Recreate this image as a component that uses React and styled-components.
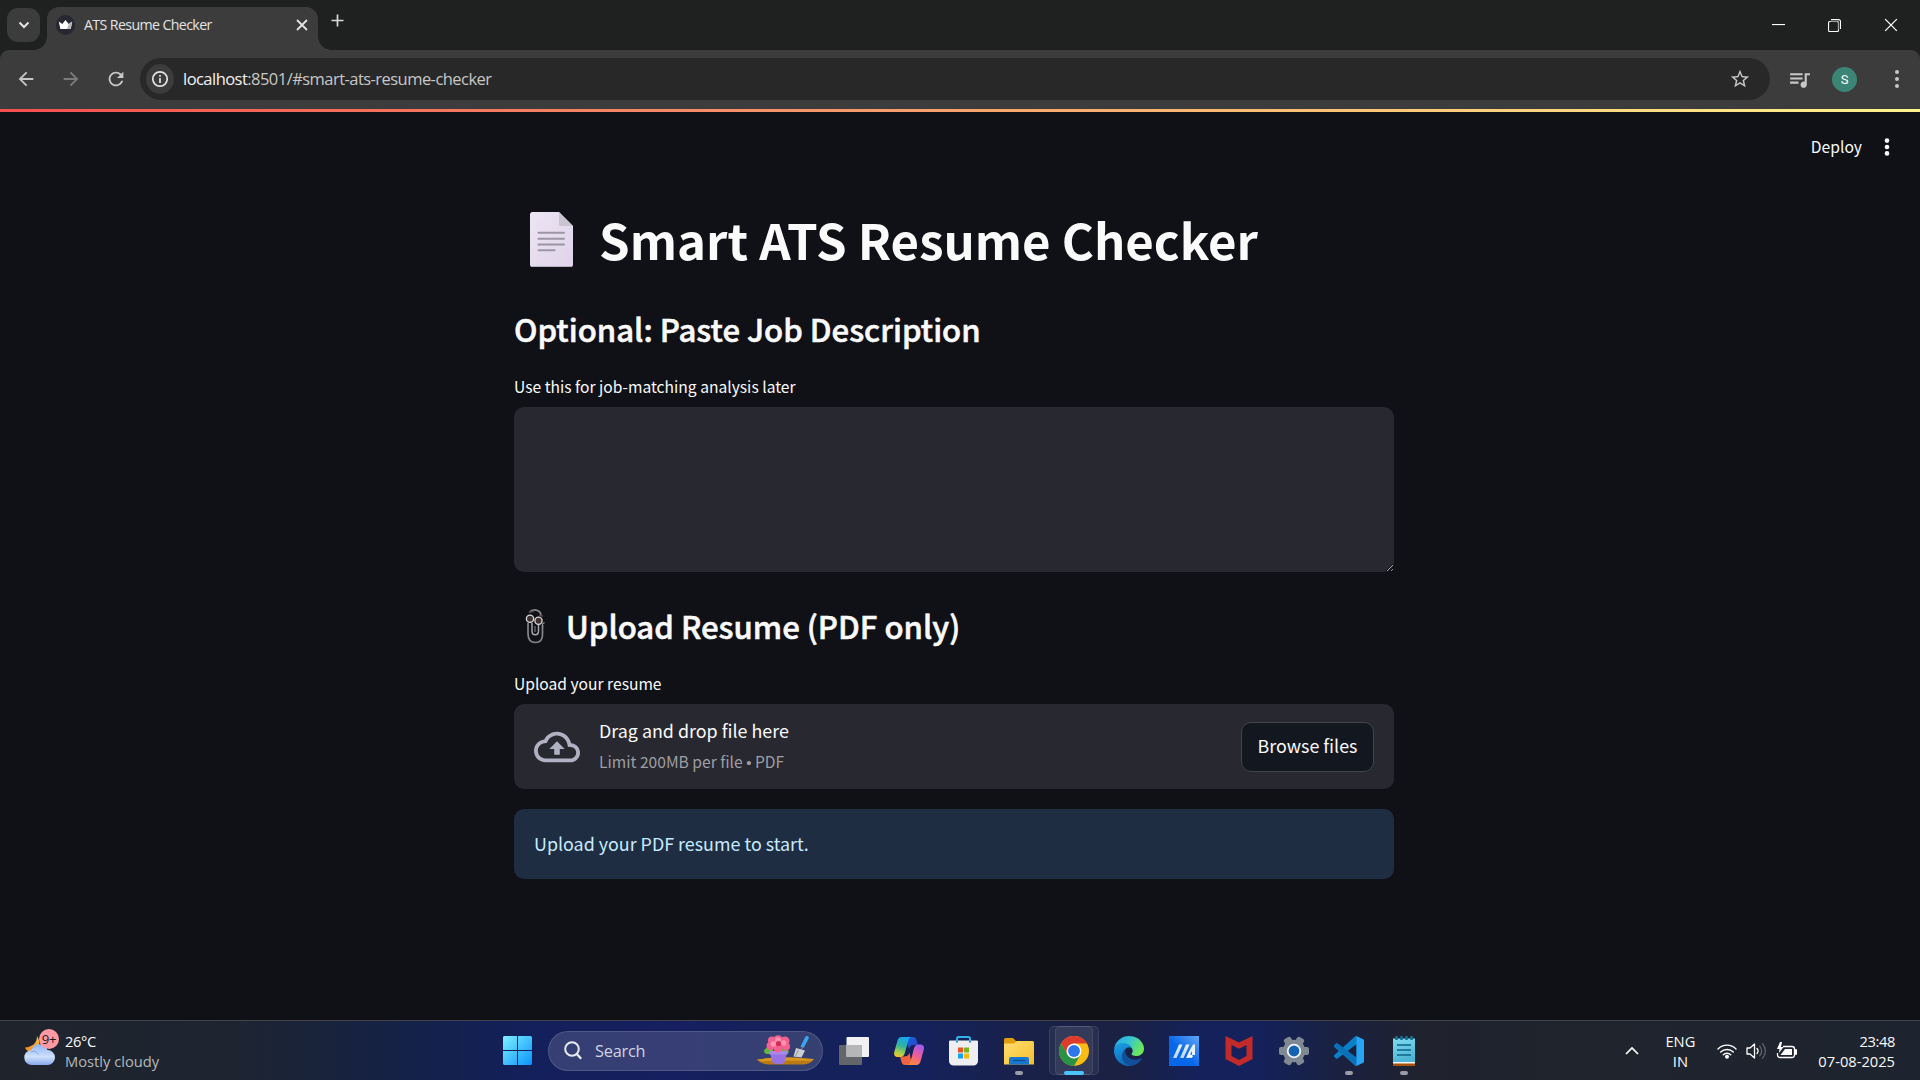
import React from "react";
import styled, { createGlobalStyle } from "styled-components";

const SANS = "'Noto Sans CJK SC', 'Noto Sans', sans-serif";
const SYSTEM = "'Open Sans', 'Noto Sans', sans-serif";

const GlobalStyle = createGlobalStyle`
  * { box-sizing: border-box; }
  body { margin: 0; background: #0f1116; overflow: hidden; }
  svg { display: block; flex: none; }
`;

const Screen = styled.div`
  width: 1920px;
  height: 1080px;
  display: flex;
  flex-direction: column;
  background: #0f1116;
  color: #fafafa;
  font-family: ${SANS};
`;

/* ---------- Browser chrome ---------- */

const TabStrip = styled.header`
  height: 50px;
  flex: none;
  display: flex;
  align-items: flex-start;
  padding: 8px 0 0 7px;
  background: #1f2120;
  font-family: ${SYSTEM};
`;

const TabSearch = styled.button`
  width: 33px;
  height: 34px;
  margin: 0 7px 0 0;
  padding: 0;
  border: 0;
  border-radius: 11px;
  background: #3c3c3c;
  display: grid;
  place-items: center;
`;

const Tab = styled.div`
  position: relative;
  width: 271px;
  height: 43px;
  margin-top: -1px;
  padding: 0 10px 7px 9px;
  border-radius: 12px 12px 0 0;
  background: #3c3c3c;
  display: flex;
  align-items: center;

  &::before,
  &::after {
    content: "";
    position: absolute;
    bottom: 0;
    width: 13px;
    height: 13px;
  }
  &::before {
    left: -13px;
    background: radial-gradient(circle at 0 0, transparent 12.5px, #3c3c3c 13px);
  }
  &::after {
    right: -13px;
    background: radial-gradient(circle at 100% 0, transparent 12.5px, #3c3c3c 13px);
  }
`;

const TabTitle = styled.span`
  flex: 1;
  margin-left: 9px;
  font-size: 14.2px;
  line-height: 20px;
  letter-spacing: -0.62px;
  color: #e3e3e3;
  white-space: nowrap;
`;

const NewTab = styled.div`
  margin: 6px 0 0 13px;
`;

const WindowControls = styled.div`
  margin: 0 22px 0 auto;
  height: 34px;
  display: flex;
  align-items: center;
  gap: 43px;
`;

const ToolbarBack = styled.div`
  flex: none;
  background: #1f2120;
`;

const Toolbar = styled.nav`
  height: 59px;
  border-radius: 9px 9px 0 0;
  background: #3c3c3c;
  display: flex;
  align-items: center;
  padding: 0 20px 1px 15px;
  font-family: ${SYSTEM};
`;

const NavButtons = styled.div`
  display: flex;
  gap: 23px;
  width: 125px;
`;

const Omnibox = styled.div`
  width: 1630px;
  height: 42px;
  border-radius: 21px;
  background: #282828;
  display: flex;
  align-items: center;
  padding: 0 19px 0 6px;
`;

const SiteInfo = styled.div`
  width: 28px;
  height: 30px;
  border-radius: 50%;
  background: #3c3c3c;
  display: grid;
  place-items: center;
`;

const Url = styled.span`
  flex: 1;
  margin-left: 9px;
  font-size: 16.5px;
  line-height: 24px;
  letter-spacing: -0.54px;
  color: #c7c7c7;
  b { font-weight: 400; color: #f2f2f2; }
`;

const ToolbarActions = styled.div`
  margin-left: auto;
  display: flex;
  align-items: center;
`;

const Avatar = styled.span`
  width: 25px;
  height: 25px;
  margin: 0 37px 0 20px;
  border-radius: 50%;
  background: #3b8577;
  color: #fff;
  font: 400 13px/25px Roboto, sans-serif;
  text-align: center;
`;

/* ---------- Page ---------- */

const Decoration = styled.div`
  height: 3px;
  flex: none;
  background: linear-gradient(90deg, #ff4b4b, #fffd80);
  background: linear-gradient(90deg, #f4504f 0%, #f58a66 35%, #fbc175 68%, #fff38c 100%);
`;

const AppHeader = styled.div`
  height: 70px;
  flex: none;
  display: flex;
  justify-content: flex-end;
  align-items: center;
  gap: 22px;
  padding: 0 30px 1px 0;
`;

const Deploy = styled.span`
  font-size: 15.66px;
  line-height: 26px;
`;

const Main = styled.main`
  flex: 1;
  width: 880px;
  margin: 24px 0 0 514px;
  display: flex;
  flex-direction: column;
`;

const Title = styled.h1`
  height: 66px;
  margin: 0;
  padding-left: 16px;
  display: flex;
  align-items: center;
  font-size: 49.1px;
  font-weight: 700;
  line-height: 66px;
  white-space: nowrap;
  svg { margin-right: 26px; }
`;

const Heading = styled.h2`
  height: 42px;
  margin: ${(p) => p.$top}px 0 0;
  padding-left: ${(p) => (p.$icon ? 11 : 0)}px;
  display: flex;
  align-items: center;
  font-size: 31.14px;
  font-weight: 500;
  line-height: 42px;
  -webkit-text-stroke: 0.55px #fafafa;
  white-space: nowrap;
  svg { margin-right: 20px; }
`;

const Label = styled.label`
  margin: 23px 0 8px;
  font-size: 15.61px;
  line-height: 26px;
`;

const TextArea = styled.textarea`
  width: 880px;
  height: 165px;
  flex: none;
  padding: 15px;
  border: 0;
  border-radius: 10px;
  background: #282831;
  color: #fafafa;
  resize: vertical;
  outline: 0;
`;

const Dropzone = styled.section`
  height: 85px;
  flex: none;
  padding: 0 20px;
  border-radius: 10px;
  background: #282831;
  display: flex;
  align-items: center;
`;

const DropText = styled.div`
  flex: 1;
  margin-left: 19px;
  padding-bottom: 1px;
  display: flex;
  flex-direction: column;
`;

const DropTitle = styled.span`
  font-size: 17.89px;
  line-height: 30px;
`;

const DropHint = styled.span`
  font-size: 15.61px;
  line-height: 32px;
  color: #9e9ea3;
  i { font: 400 15px/1 "Liberation Sans", sans-serif; }
`;

const Browse = styled.button`
  width: 133px;
  height: 50px;
  padding: 0 0 3px;
  border: 1px solid #42434b;
  border-radius: 10px;
  background: #131720;
  color: #fafafa;
  font: 400 17.87px/30px ${SANS};
`;

const Notice = styled.div`
  height: 70px;
  flex: none;
  margin-top: 20px;
  padding: 0 20px 3px;
  border-radius: 10px;
  background: #1f2d43;
  color: #c7ebff;
  display: flex;
  align-items: center;
  font-size: 17.89px;
`;

/* ---------- Taskbar ---------- */

const Taskbar = styled.footer`
  height: 60px;
  flex: none;
  display: flex;
  align-items: center;
  border-top: 1px solid #41434a;
  background: linear-gradient(90deg, #1f242c 0, #1e2531 230px, #19233b 320px, #14214d 440px, #13205a 520px, #171f60 680px, #14215a 800px, #15215a 930px, #1a2147 1040px, #1b2143 1120px, #14215b 1200px, #14215a 1260px, #1a2140 1340px, #20222e 1420px, #1f242d 1560px, #1e242f 1920px);
  font-family: ${SYSTEM};
`;

const Weather = styled.div`
  width: 478px;
  height: 59px;
  padding-left: 24px;
  display: flex;
  align-items: center;
  gap: 5px;
`;

const Lines = styled.div`
  display: flex;
  flex-direction: column;
  align-items: ${(p) => p.$align || "flex-start"};
  font-size: 14.7px;
  line-height: 20px;
  letter-spacing: ${(p) => p.$spacing || 0}px;
  white-space: nowrap;
`;

const Muted = styled.span`
  color: #b5b8bd;
`;

const Short = styled.span`
  letter-spacing: -0.4px;
`;

const WeatherIcon = styled.div`
  position: relative;
  width: 36px;
  height: 44px;
`;

const Badge = styled.span`
  position: absolute;
  left: 15px;
  top: 0;
  width: 20px;
  height: 20px;
  border-radius: 50%;
  background: #ff99a4;
  color: #1b1b1b;
  font-size: 13.2px;
  line-height: 20px;
  letter-spacing: -0.3px;
  text-align: center;
`;

const StartButton = styled.div`
  width: 70px;
  padding-left: 25px;
`;

const SearchBox = styled.div`
  width: 275px;
  height: 40px;
  margin-right: 3px;
  padding: 0 8px 0 15px;
  border: 1px solid rgba(255, 255, 255, 0.13);
  border-radius: 20px;
  background: rgba(255, 255, 255, 0.14);
  display: flex;
  align-items: center;
`;

const SearchText = styled.span`
  flex: 1;
  margin-left: 13px;
  padding-top: 1px;
  font-size: 16.3px;
  letter-spacing: -0.2px;
  color: #d0d4e0;
`;

const Slot = styled.div`
  position: relative;
  width: 55px;
  height: 59px;
  display: grid;
  place-items: center;
`;

const ActiveTile = styled.span`
  position: absolute;
  left: 3px;
  top: 5px;
  width: 44px;
  height: 49px;
  margin-left: ${(p) => p.$shift || 0}px;
  border: 1px solid rgba(255, 255, 255, 0.09);
  border-radius: 5px;
  background: rgba(255, 255, 255, 0.06);
`;

const AppGlyph = styled.span`
  position: relative;
`;

const Indicator = styled.span`
  position: absolute;
  left: 50%;
  bottom: 5px;
  width: ${(p) => (p.$active ? 20 : 8)}px;
  height: 4px;
  border-radius: 2px;
  background: ${(p) => (p.$active ? "#4cc2ff" : "#9a9ca8")};
  transform: translateX(-50%);
`;

const Tray = styled.div`
  margin-left: auto;
  padding-right: 25px;
  display: flex;
  align-items: center;
`;

const Language = styled.div`
  margin: 0 22px 0 26px;
  padding-top: 1px;
`;

const StatusIcons = styled.div`
  display: flex;
  align-items: center;
  gap: 9px;
  margin-right: 20px;
`;

/* ---------- Icons ---------- */

const Material = ({ size, d, fill = "#c7c7c7" }) => (
  <svg width={size} height={size} viewBox="0 0 24 24" fill={fill}><path d={d} /></svg>
);

const BACK = "M20 11H7.83l5.59-5.59L12 4l-8 8 8 8 1.41-1.41L7.83 13H20v-2z";
const FORWARD = "M12 4l-1.41 1.41L16.17 11H4v2h12.17l-5.58 5.59L12 20l8-8z";
const REFRESH = "M17.65 6.35A7.958 7.958 0 0012 4c-4.42 0-7.99 3.58-7.99 8s3.57 8 7.99 8c3.73 0 6.84-2.55 7.73-6h-2.08A5.99 5.99 0 0112 18c-3.31 0-6-2.69-6-6s2.69-6 6-6c1.66 0 3.14.69 4.22 1.78L13 11h7V4l-2.35 2.35z";
const STAR = "M22 9.24l-7.19-.62L12 2 9.19 8.63 2 9.24l5.46 4.73L5.82 21 12 17.27 18.18 21l-1.63-7.03L22 9.24zM12 15.4l-3.76 2.27 1-4.28-3.32-2.88 4.38-.38L12 6.1l1.71 4.04 4.38.38-3.32 2.88 1 4.28L12 15.4z";
const QUEUE = "M15 6H3v2h12V6zm0 4H3v2h12v-2zM3 16h8v-2H3v2zM17 6v8.18c-.31-.11-.65-.18-1-.18-1.66 0-3 1.34-3 3s1.34 3 3 3 3-1.34 3-3V8h3V6h-5z";
const CLOUD = "M19.35 10.04C18.67 6.59 15.64 4 12 4 9.11 4 6.6 5.64 5.35 8.04 2.34 8.36 0 10.91 0 14c0 3.31 2.69 6 6 6h13c2.76 0 5-2.24 5-5 0-2.64-2.05-4.78-4.65-4.96zM19 18H6c-2.21 0-4-1.79-4-4 0-2.05 1.53-3.76 3.56-3.97l1.07-.11.5-.95C8.08 7.14 9.94 6 12 6c2.62 0 4.88 1.86 5.39 4.43l.3 1.5 1.53.11c1.56.1 2.78 1.41 2.78 2.96 0 1.65-1.35 3-3 3zM8 13h2.55v3h2.9v-3H16l-4-4z";

const Chevron = () => (
  <svg width="12" height="12" viewBox="0 0 12 12" fill="none" stroke="#e3e3e3" strokeWidth="2"><path d="M1.5 3.5L6 8l4.500-4.500" /></svg>
);

const Favicon = () => (
  <svg width="19" height="20" viewBox="0 0 19 20">
    <ellipse cx="9.500" cy="10" rx="9.500" ry="10" fill="#262730" />
    <path d="M2.800 6.600l3.500 2.300L9.500 5l3.200 3.900 3.500-2.300-1.500 7.400H4.300z" fill="#fff" />
    <path d="M12.700 8.900l3.500-2.300-1.500 7.400H11z" fill="#b9b9bd" />
  </svg>
);

const Cross = ({ size, width, color }) => (
  <svg width={size} height={size} viewBox="0 0 12 12" fill="none" stroke={color} strokeWidth={width}><path d="M1 1l10 10M11 1L1 11" /></svg>
);

const Plus = () => (
  <svg width="13" height="13" viewBox="0 0 13 13" fill="none" stroke="#d8d8d8" strokeWidth="1.700"><path d="M6.500 .5v12M.5 6.500h12" /></svg>
);

const Minimize = () => (
  <svg width="13" height="13" viewBox="0 0 13 13"><path d="M0 5h13v1.100H0z" fill="#fff" /></svg>
);

const Restore = () => (
  <svg width="13" height="13" viewBox="0 0 13 13" fill="none" stroke="#fff" strokeWidth="1.100">
    <rect x=".55" y="2.550" width="9.900" height="9.900" rx="1" />
    <path d="M3 .6h7.500a2 2 0 0 1 2 2V10" />
    <path d="M2.600 2.500h6a2 2 0 0 1 2 2v6" stroke="#9a9a9a" />
  </svg>
);

const Info = () => (
  <svg width="18" height="18" viewBox="0 0 18 18" fill="none" stroke="#e3e3e3" strokeWidth="1.700">
    <circle cx="9" cy="9" r="7.200" /><path d="M9 8v5M9 5v1.800" />
  </svg>
);

const Dots = ({ gap, r, color }) => (
  <svg width="6" height="20" viewBox="0 0 6 20" fill={color}>
    <circle cx="3" cy={10 - gap} r={r} /><circle cx="3" cy="10" r={r} /><circle cx="3" cy={10 + gap} r={r} />
  </svg>
);

const PageEmoji = () => (
  <svg width="43" height="55" viewBox="0 0 43 55">
    <defs><linearGradient id="paper" x2="1" y2="1"><stop stopColor="#ece5f3" /><stop offset="1" stopColor="#dfd3ea" /></linearGradient></defs>
    <path d="M2.500 0H29l14 14v38.500a2.500 2.500 0 0 1-2.500 2.500h-38A2.500 2.500 0 0 1 0 52.500v-50A2.500 2.500 0 0 1 2.500 0z" fill="url(#paper)" />
    <path d="M29 0l14 14H30.500a1.500 1.500 0 0 1-1.500-1.500z" fill="#c9c4cf" />
    <path d="M1 54.500h41" stroke="#b9aec4" strokeWidth="1" />
    <path d="M8.500 20.800h25.500M8.500 26.700h25.500M8.500 32.500h25.500M8.500 38.300H24.500" stroke="#9c95a3" strokeWidth="2" strokeLinecap="round" />
  </svg>
);

const ClipEmoji = () => (
  <svg width="21" height="35" viewBox="0 0 21 35" fill="none">
    <path d="M4.500 3.200C8-.5 15 .5 16 6M3 14v10.500c0 6 3 9 7.500 9s7-3 7-8V16" stroke="#85858a" strokeWidth="1.700" />
    <path d="M7 14v8c0 5 6.500 5 6.500 0v-6" stroke="#a5a5aa" strokeWidth="1.500" />
    <path d="M10 17v6" stroke="#737378" strokeWidth="1.200" />
    <path d="M17.500 18.500V15l2-1.500" stroke="#8b8b90" strokeWidth="1.200" />
    <circle cx="5" cy="9.800" r="3.600" fill="#40302f" stroke="#dcd9dc" strokeWidth="1.300" />
    <circle cx="13.500" cy="11.800" r="3.600" fill="#40302f" stroke="#dcd9dc" strokeWidth="1.300" />
    <path d="M4 3.300l5-1M14 6.500l4 .5" stroke="#5c4745" strokeWidth="1.500" />
  </svg>
);

const MoonCloud = () => (
  <svg width="36" height="44" viewBox="0 0 36 44">
    <defs>
      <linearGradient id="cloud" x2="0" y2="1"><stop stopColor="#8fb6f5" /><stop offset=".6" stopColor="#cfe0fb" /><stop offset="1" stopColor="#86a8ec" /></linearGradient>
      <linearGradient id="moon" x1="1" x2="0" y2="1"><stop stopColor="#f5bd3e" /><stop offset="1" stopColor="#f08a1d" /></linearGradient>
    </defs>
    <path d="M13 7c4 6 3 13-4 15C6 23.500 2 22 1 18.500c7-.5 12-4 12-11.500z" fill="url(#moon)" />
    <path d="M8 36a7.500 7.500 0 0 1-.5-15A8.500 8.500 0 0 1 23.500 21a7.500 7.500 0 0 1 0 15z" fill="url(#cloud)" />
    <path d="M7 23c3-1.500 6 0 7.500 2.500" stroke="#7fa4ea" fill="none" />
  </svg>
);

const Windows = () => (
  <svg width="29" height="29" viewBox="0 0 29 29">
    <defs><linearGradient id="win" gradientUnits="userSpaceOnUse" x1="0" y1="0" x2="29" y2="29"><stop stopColor="#7df0ff" /><stop offset="1" stopColor="#0a93fb" /></linearGradient></defs>
    <path d="M1 0h13v14H0V1zM15 0h13l1 1v13H15zM0 15h14v14H1l-1-1zM15 15h14v13l-1 1H15z" fill="url(#win)" />
  </svg>
);

const Magnifier = () => (
  <svg width="18" height="19" viewBox="0 0 18 19" fill="none" stroke="#e8eaf2" strokeWidth="2">
    <circle cx="8" cy="8" r="6.800" /><path d="M12.800 13l4.400 4.800" strokeWidth="2.400" />
  </svg>
);

const Flower = () => (
  <svg width="57" height="31" viewBox="0 0 57 31">
    <path d="M0 24.500c12-1 20-3.500 30-2 10-.5 18 1 27 1.500-3 4.500-8 5.500-12 5.500H14C8 29.500 3 28 0 24.500z" fill="#b97a12" />
    <path d="M0 24.500c12-1 20-3.500 30-2 10-.5 18 1 27 1.500l-3 1.800c-10 0-38-.5-50 .7z" fill="#d79620" />
    <path d="M7 17c0-4 5-6 9-3l1 5H9zM32 17c-1-4-6-5-9-2l-2 4h9z" fill="#62b83c" />
    <path d="M13 18h17l-2.500 9.500c-2 2-10 2-12 0z" fill="#9872e2" />
    <path d="M12.500 16h18v3.500h-18z" fill="#a988ee" />
    <g fill="#f4608f">
      <circle cx="21" cy="4.800" r="4.600" /><circle cx="28" cy="6" r="4.500" /><circle cx="29" cy="11.500" r="4" /><circle cx="21" cy="13" r="4.500" /><circle cx="13.500" cy="11" r="4" /><circle cx="15" cy="5.500" r="4" />
    </g>
    <g fill="#ff94b3"><circle cx="21" cy="5" r="2.800" /><circle cx="26.500" cy="8" r="2.800" /><circle cx="16.500" cy="9" r="2.800" /></g>
    <circle cx="21.500" cy="8.500" r="2.600" fill="#d52a55" />
    <path d="M48.500 1.500c2-1.500 4 0 3 2.500l-5 9-3-1.500z" fill="#3aa5ef" />
    <path d="M45.500 12l-1.500 3" stroke="#6d7785" strokeWidth="1.500" />
    <path d="M39 13l9 2.500-3.500 7-8-1z" fill="#c9cfd4" /><path d="M41.500 15l-3 6" stroke="#8d969e" />
  </svg>
);

const TaskView = () => (
  <svg width="30" height="28" viewBox="0 0 30 28">
    <rect y="8" width="23" height="20" rx="1" fill="#62656a" />
    <rect x="7.500" width="22.500" height="20" rx="1" fill="#f1f1f3" />
    <path d="M7.500 8H23v12H7.500z" fill="#b5b6b8" />
  </svg>
);

const Copilot = () => (
  <svg width="30" height="28" viewBox="0 0 30 28">
    <defs>
      <linearGradient id="cpa" x1=".6" x2=".3" y2="1"><stop stopColor="#18a5f0" /><stop offset=".45" stopColor="#2db3a4" /><stop offset=".8" stopColor="#a8cf4a" /><stop offset="1" stopColor="#f0c62c" /></linearGradient>
      <linearGradient id="cpb" x1=".7" x2=".3" y2="1"><stop stopColor="#a25bf0" /><stop offset=".5" stopColor="#ee5c9a" /><stop offset="1" stopColor="#fb8a3c" /></linearGradient>
      <linearGradient id="cpc" x2="1" y2="1"><stop stopColor="#1a63e0" /><stop offset="1" stopColor="#2a3fc6" /></linearGradient>
    </defs>
    <path d="M12 0h7c2 0 3 1.300 3.500 3L24 8h-4c-3 0-4 1.500-5 4z" fill="url(#cpc)" />
    <path d="M18 28h-7c-2 0-3-1.300-3.500-3L6 19.500h4c3 0 4.500-1 5.500-4z" fill="#ef6340" />
    <path d="M7.500 0H18c-2 0-3 1.500-3.600 3.500L10.800 16c-.8 2.700-2 4-4.500 4H3.500C.8 20-.4 18 .3 15L3.500 3.500C4.200 1.200 5.300 0 7.500 0z" fill="url(#cpa)" />
    <path d="M22.500 28H13c2 0 3-1.500 3.600-3.500L19.800 12c.8-2.700 2-4.500 4.500-4.500h2.400c2.600 0 3.800 2 3.100 5L26.500 24.500c-.7 2.300-1.800 3.500-4 3.500z" fill="url(#cpb)" />
  </svg>
);

const Store = () => (
  <svg width="29" height="30" viewBox="0 0 29 30">
    <path d="M8 5.500V2.500A1.500 1.500 0 0 1 9.500 1h10A1.500 1.500 0 0 1 21 2.500v3" fill="none" stroke="#2fb4ea" strokeWidth="2" />
    <path d="M0 5.500a1 1 0 0 1 1-1h27a1 1 0 0 1 1 1V25a4.500 4.500 0 0 1-4.500 4.500h-20A4.500 4.500 0 0 1 0 25z" fill="#efeff1" />
    <path d="M8 4.500v2M21 4.500v2" stroke="#1a8fd0" strokeWidth="2" />
    <path d="M9 11.500h5v5H9z" fill="#e8532b" /><path d="M15 11.500h5v5h-5z" fill="#7fb51c" />
    <path d="M9 17.500h5v5H9z" fill="#15a0ea" /><path d="M15 17.500h5v5h-5z" fill="#fbb813" />
  </svg>
);

const Folder = () => (
  <svg width="30" height="28" viewBox="0 0 30 28">
    <defs><linearGradient id="fold" x2="1" y2="1"><stop stopColor="#ffdf70" /><stop offset="1" stopColor="#f8bd2d" /></linearGradient></defs>
    <path d="M0 2.500A1.500 1.500 0 0 1 1.500 1H9l3 3h17v5H0z" fill="#dd9e0c" />
    <path d="M0 6.500h9.500L13 4h15.500A1.500 1.500 0 0 1 30 5.500V27.500H0z" fill="url(#fold)" />
    <path d="M5 22a2 2 0 0 1 2-2h16a2 2 0 0 1 2 2v5.500H5z" fill="#1678cf" /><path d="M9 23.500h12" stroke="#0c4d8f" strokeWidth="1.200" />
  </svg>
);

const Chrome = () => (
  <svg width="30" height="30" viewBox="0 0 48 48">
    <circle cx="24" cy="24" r="24" fill="#fbbc16" />
    <path d="M3.200 12A24 24 0 0 1 44.800 12H24L13.600 30z" fill="#dd3b2d" />
    <path d="M3.200 12A24 24 0 0 0 24 48l10.400-18-10.400 6-10.400-6z" fill="#289245" />
    <circle cx="24" cy="24" r="12" fill="#fff" /><circle cx="24" cy="24" r="9.500" fill="#2b76ea" />
  </svg>
);

const Edge = () => (
  <svg width="30" height="30" viewBox="4.600 5 256 256">
    <defs>
      <linearGradient id="ea" x2="1" y2=".4"><stop stopColor="#2aa4e8" /><stop offset=".5" stopColor="#33c3d8" /><stop offset="1" stopColor="#6ae75c" /></linearGradient>
      <linearGradient id="eb" x2=".3" y2="1"><stop stopColor="#1ba3e4" /><stop offset="1" stopColor="#0f6bbd" /></linearGradient>
    </defs>
    <path d="M235.680 195.460a93.730 93.730 0 0 1-10.540 4.710 101.870 101.870 0 0 1-35.900 6.460c-47.320 0-88.540-32.550-88.540-74.320A31.480 31.480 0 0 1 117.130 105c-42.800 1.800-53.800 46.400-53.800 72.530 0 73.880 68.090 81.370 82.760 81.370 7.910 0 19.840-2.300 27-4.560l1.310-.44a128.340 128.340 0 0 0 66.600-52.800 4 4 0 0 0-5.320-5.640z" fill="#114f9b" />
    <path d="M110.340 246.340A79.200 79.200 0 0 1 87.600 225a80.720 80.720 0 0 1 29.530-120c3.120-1.470 8.450-4.130 15.540-4a32.350 32.350 0 0 1 25.690 13 31.880 31.880 0 0 1 6.360 18.660c0-.21 24.460-79.600-80-79.600-43.900 0-80 41.660-80 78.210a130.150 130.150 0 0 0 12.110 56 128 128 0 0 0 156.380 67.110 75.550 75.550 0 0 1-62.780-8z" fill="url(#eb)" />
    <path d="M156.940 153.780c-.81 1.050-3.300 2.500-3.300 5.660 0 2.610 1.700 5.120 4.720 7.230 14.380 10 41.490 8.680 41.560 8.680a59.560 59.560 0 0 0 30.270-8.350 61.380 61.380 0 0 0 30.430-52.880c.26-22.410-8-37.310-11.340-43.910C228.090 28.760 182.350 5 132.610 5a128 128 0 0 0-128 126.200c.48-36.540 36.800-66.050 80-66.050 3.500 0 23.460.34 42 10.070 16.340 8.580 24.900 18.940 30.850 29.210 6.180 10.670 7.280 24.150 7.280 29.520s-2.740 13.330-7.800 19.830z" fill="url(#ea)" />
  </svg>
);

const MyAsus = () => (
  <svg width="30" height="30" viewBox="0 0 30 30">
    <defs>
      <linearGradient id="asus" x1="0" y1="1" x2="1" y2="0"><stop offset=".45" stopColor="#0668e8" /><stop offset="1" stopColor="#63a5f8" /></linearGradient>
      <linearGradient id="fade" x2="0" y2="1"><stop stopColor="#fff" /><stop offset="1" stopColor="#cfe2ff" /></linearGradient>
    </defs>
    <path d="M0 0h30v30H0z" fill="url(#asus)" />
    <path d="M4 22L10 8.500h3.500L7.500 22zM11 22L17 8.500h3.500L14.500 22z" fill="url(#fade)" opacity=".9" />
    <path d="M17 22l2.500-5.500 4.500-8h2V19h-3v-4l-2.500 4.500V22z" fill="#e9f2ff" /><circle cx="21.800" cy="20.300" r="1.800" fill="#fff" />
  </svg>
);

const McAfee = () => (
  <svg width="28" height="30" viewBox="0 0 28 30">
    <path d="M.5 0L14 6.500 27.500 0v23L14 30 .5 23zM6.500 9v11L14 24l7.500-4V9L14 12.800z" fill="#c32b2b" fillRule="evenodd" />
  </svg>
);

const Gear = () => (
  <svg width="30" height="30" viewBox="0 0 30 30">
    <g fill="#7f8992">
      <circle cx="15" cy="15" r="11.300" />
      {[0, 60, 120].map((a) => <rect key={a} x="0" y="11" width="30" height="8" rx="2" transform={`rotate(${a} 15 15)`} />)}
    </g>
    <circle cx="15" cy="15" r="7.200" fill="#f1f4f6" /><circle cx="15" cy="15" r="5.400" fill="#1363b1" />
  </svg>
);

const VSCode = () => (
  <svg width="30" height="30" viewBox="0 0 24 24">
    <path d="M23.150 2.587L18.210.21a1.494 1.494 0 0 0-1.705.29l-9.460 8.630-4.120-3.128a.999.999 0 0 0-1.276.057L.327 7.261A1 1 0 0 0 .326 8.740L3.899 12 .326 15.260a1 1 0 0 0 .001 1.479L1.650 17.940a.999.999 0 0 0 1.276.057l4.120-3.128 9.460 8.630a1.492 1.492 0 0 0 1.704.29l4.942-2.377A1.500 1.500 0 0 0 24 20.060V3.939a1.500 1.500 0 0 0-.85-1.352zm-5.146 14.861L10.826 12l7.178-5.448v10.896z" fill="#0c7fc9" />
    <path d="M7.050 14.870L3.900 12 .33 8.740a1 1 0 0 1 0-1.480L1.650 6.060a1 1 0 0 1 1.280-.06L18 17.450v6z" fill="#0a70b8" />
    <path d="M18 .2l5.150 2.390A1.500 1.500 0 0 1 24 3.940v16.120a1.500 1.500 0 0 1-.85 1.350L18 23.800z" fill="#27a5f2" />
  </svg>
);

const Notepad = () => (
  <svg width="22" height="30" viewBox="0 0 22 30">
    <defs><linearGradient id="note" x2=".3" y2="1"><stop stopColor="#7edcf2" /><stop offset="1" stopColor="#4db4d6" /></linearGradient></defs>
    <path d="M0 27h22v3H0z" fill="#a6520d" /><path d="M0 25h22v2.500H0z" fill="#f3f3f3" />
    <path d="M0 2.500h22V26H0z" fill="url(#note)" />
    <path d="M3.500 0v4M8.500 0v4M13.500 0v4M18.500 0v4" stroke="#12708f" strokeWidth="2.500" />
    <path d="M4 9h14M4 14h14M4 19h14" stroke="#0f6483" strokeWidth="1.700" />
  </svg>
);

const Caret = () => (
  <svg width="14" height="10" viewBox="0 0 14 10" fill="none" stroke="#fff" strokeWidth="1.700"><path d="M1 8l6-6 6 6" /></svg>
);

const Wifi = () => (
  <svg width="20" height="16" viewBox="0 0 20 16" fill="none" stroke="#fff" strokeWidth="1.400" strokeLinecap="round">
    <path d="M1 6a12.500 12.500 0 0 1 18 0M3.700 9a9 9 0 0 1 12.600 0M6.300 11.700a5.300 5.300 0 0 1 7.400 0" /><circle cx="10" cy="13.700" r="1.300" fill="#fff" />
  </svg>
);

const Speaker = () => (
  <svg width="21" height="18" viewBox="0 0 21 18" fill="none" stroke="#fff" strokeWidth="1.300" strokeLinejoin="round" strokeLinecap="round">
    <path d="M1 6h3l4.500-4v14L4 12H1z" /><path d="M11 6.500a3.500 3.500 0 0 1 0 5" />
    <path d="M13.700 4.200a7 7 0 0 1 0 9.600M16.500 1.800a10.500 10.500 0 0 1 0 14.400" stroke="#5d6169" />
  </svg>
);

const Battery = () => (
  <svg width="22" height="18" viewBox="0 0 22 18" fill="none">
    <path d="M7 4.500h9a2.500 2.500 0 0 1 2.500 2.500v6a2.500 2.500 0 0 1-2.500 2.500H4A2.500 2.500 0 0 1 1.500 13v-2" stroke="#fff" strokeWidth="1.300" />
    <path d="M9 7h7v6H4.500z" fill="#fff" /><path d="M20 8v4" stroke="#fff" strokeWidth="2" strokeLinecap="round" />
    <path d="M4 0L1 7h2.500L3 11l4.500-6H5L6 0z" fill="#fff" />
  </svg>
);

const apps = [
  { name: "task-view", icon: <TaskView /> },
  { name: "copilot", icon: <Copilot /> },
  { name: "store", icon: <Store /> },
  { name: "explorer", icon: <Folder />, running: true },
  { name: "chrome", icon: <Chrome />, running: true, active: true },
  { name: "edge", icon: <Edge /> },
  { name: "asus", icon: <MyAsus /> },
  { name: "mcafee", icon: <McAfee /> },
  { name: "settings", icon: <Gear /> },
  { name: "vscode", icon: <VSCode />, running: true },
  { name: "notepad", icon: <Notepad />, running: true },
];

export default function App() {
  return (
    <Screen>
      <GlobalStyle />
      <TabStrip>
        <TabSearch><Chevron /></TabSearch>
        <Tab>
          <Favicon />
          <TabTitle>ATS Resume Checker</TabTitle>
          <Cross size={12} width={1.8} color="#e3e3e3" />
        </Tab>
        <NewTab><Plus /></NewTab>
        <WindowControls>
          <Minimize />
          <Restore />
          <Cross size={14} width={1.1} color="#fff" />
        </WindowControls>
      </TabStrip>

      <ToolbarBack>
        <Toolbar>
          <NavButtons>
            <Material size={22} d={BACK} />
            <Material size={22} d={FORWARD} fill="#7c7c7c" />
            <Material size={22} d={REFRESH} />
          </NavButtons>
          <Omnibox>
            <SiteInfo><Info /></SiteInfo>
            <Url><b>localhost</b>:8501/#smart-ats-resume-checker</Url>
            <Material size={22} d={STAR} />
          </Omnibox>
          <ToolbarActions>
            <Material size={25} d={QUEUE} />
            <Avatar>S</Avatar>
            <Dots gap={7} r={2} color="#c7c7c7" />
          </ToolbarActions>
        </Toolbar>
      </ToolbarBack>

      <Decoration />
      <AppHeader>
        <Deploy>Deploy</Deploy>
        <Dots gap={6.4} r={2.3} color="#fafafa" />
      </AppHeader>

      <Main>
        <Title><PageEmoji />Smart ATS Resume Checker</Title>
        <Heading $top={36}>Optional: Paste Job Description</Heading>
        <Label>Use this for job-matching analysis later</Label>
        <TextArea />
        <Heading $top={33} $icon><ClipEmoji />Upload Resume (PDF only)</Heading>
        <Label>Upload your resume</Label>
        <Dropzone>
          <Material size={46} d={CLOUD} fill="#b0b1c3" />
          <DropText>
            <DropTitle>Drag and drop file here</DropTitle>
            <DropHint>Limit 200MB per file <i>•</i> PDF</DropHint>
          </DropText>
          <Browse>Browse files</Browse>
        </Dropzone>
        <Notice>Upload your PDF resume to start.</Notice>
      </Main>

      <Taskbar>
        <Weather>
          <WeatherIcon><MoonCloud /><Badge>9+</Badge></WeatherIcon>
          <Lines><Short>26°C</Short><Muted>Mostly cloudy</Muted></Lines>
        </Weather>
        <StartButton><Windows /></StartButton>
        <SearchBox>
          <Magnifier />
          <SearchText>Search</SearchText>
          <Flower />
        </SearchBox>
        {apps.map((app) => (
          <Slot key={app.name}>
            {app.active && <><ActiveTile $shift={6} /><ActiveTile /></>}
            <AppGlyph>{app.icon}</AppGlyph>
            {app.running && <Indicator $active={app.active} />}
          </Slot>
        ))}
        <Tray>
          <Caret />
          <Language><Lines $align="center"><span>ENG</span><span>IN</span></Lines></Language>
          <StatusIcons><Wifi /><Speaker /><Battery /></StatusIcons>
          <Lines $align="flex-end"><Short>23:48</Short><span>07-08-2025</span></Lines>
        </Tray>
      </Taskbar>
    </Screen>
  );
}
